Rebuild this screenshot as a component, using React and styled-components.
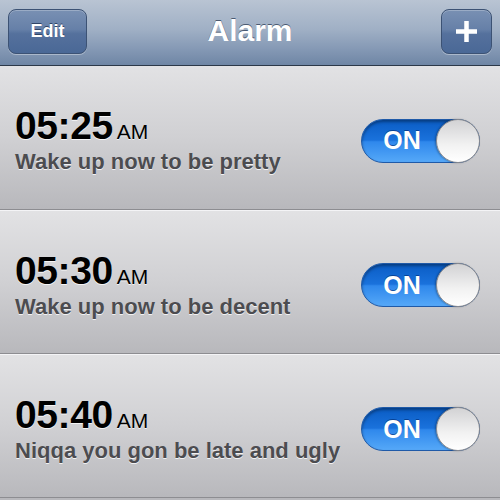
import React from 'react';
import styled, { createGlobalStyle } from 'styled-components';

const GlobalStyle = createGlobalStyle`
  html, body {
    margin: 0;
    padding: 0;
    background: #b8b8bc;
  }
  body {
    font-family: "Liberation Sans", Arial, sans-serif;
  }
`;

const Screen = styled.div`
  width: 500px;
  height: 500px;
  overflow: hidden;
  display: flex;
  flex-direction: column;
`;

const NavBar = styled.div`
  height: 66px;
  flex-shrink: 0;
  display: flex;
  align-items: center;
  justify-content: space-between;
  padding: 0 8px 2px;
  box-sizing: border-box;
  background: linear-gradient(#b9c4d3 0%, #a0b0c5 45%, #8599b5 75%, #6f86a5 100%);
  border-bottom: 1px solid #2c3848;
  position: relative;
`;

const NavTitle = styled.div`
  position: absolute;
  left: 0;
  right: 0;
  top: 14px;
  text-align: center;
  font-size: 30px;
  font-weight: bold;
  color: #fff;
  text-shadow: 0 -1px 0 #4a5a72;
  pointer-events: none;
`;

const BarButton = styled.button`
  height: 45px;
  width: ${p => p.$width}px;
  border-radius: 8px;
  border: 1px solid #3c5274;
  background: linear-gradient(#7990b3 0%, #6680a8 45%, #55719d 55%, #4a6896 100%);
  box-shadow: inset 0 1px 0 rgba(255,255,255,0.25), 0 1px 0 rgba(255,255,255,0.35);
  color: #fff;
  font-family: "Liberation Sans", Arial, sans-serif;
  font-weight: bold;
  font-size: ${p => p.$size}px;
  text-shadow: 0 -1px 0 #2f4466;
  display: flex;
  align-items: center;
  justify-content: center;
  padding: 0;
  position: relative;
  z-index: 1;
`;

const Row = styled.div`
  height: 144px;
  flex-shrink: 0;
  display: flex;
  align-items: center;
  justify-content: space-between;
  padding: 6px 20px 0 15px;
  box-sizing: border-box;
  background: linear-gradient(#e2e2e4 0%, #d0d0d3 50%, #b8b8bc 100%);
  border-top: ${p => (p.$first ? 'none' : '1px solid #f4f4f6')};
  border-bottom: 1px solid #8d8d91;
`;

const Info = styled.div`
  display: flex;
  flex-direction: column;
`;

const TimeLine = styled.div`
  display: flex;
  align-items: baseline;
  gap: 4px;
  color: #000;
  text-shadow: 0 1px 0 rgba(255,255,255,0.8);
`;

const Time = styled.span`
  font-size: 39px;
  font-weight: bold;
  letter-spacing: -0.4px;
  line-height: 40px;
`;

const Meridiem = styled.span`
  font-size: 21px;
`;

const Label = styled.div`
  margin-top: 3px;
  font-size: 22px;
  font-weight: bold;
  color: #4c4c50;
  text-shadow: 0 1px 0 rgba(255,255,255,0.8);
`;

const Switch = styled.div`
  width: 119px;
  height: 44px;
  border-radius: 22px;
  box-sizing: border-box;
  border: 1px solid #1f5aa8;
  background: linear-gradient(#0a5cc4 0%, #1a72dc 48%, #2f88ec 52%, #55a8f8 100%);
  box-shadow: inset 0 2px 3px rgba(0,0,0,0.35);
  display: flex;
  align-items: center;
  justify-content: space-between;
`;

const SwitchText = styled.span`
  flex: 1;
  text-align: center;
  color: #fff;
  font-weight: bold;
  font-size: 25px;
  text-shadow: 0 -1px 0 rgba(0,40,110,0.6);
  padding-left: 6px;
`;

const Knob = styled.div`
  width: 44px;
  height: 44px;
  margin-right: -1px;
  border-radius: 50%;
  box-sizing: border-box;
  border: 1px solid #8b8b8f;
  background: linear-gradient(#d2d2d4 0%, #f2f2f2 60%, #ffffff 100%);
  box-shadow: -1px 0 2px rgba(0,0,0,0.3);
`;

const alarms = [
  { time: '05:25', label: 'Wake up now to be pretty' },
  { time: '05:30', label: 'Wake up now to be decent' },
  { time: '05:40', label: 'Niqqa you gon be late and ugly' },
];

const AlarmRow = ({ alarm, first }) => (
  <Row $first={first}>
    <Info>
      <TimeLine>
        <Time>{alarm.time}</Time>
        <Meridiem>AM</Meridiem>
      </TimeLine>
      <Label>{alarm.label}</Label>
    </Info>
    <Switch>
      <SwitchText>ON</SwitchText>
      <Knob />
    </Switch>
  </Row>
);

const App = () => (
  <Screen>
    <GlobalStyle />
    <NavBar>
      <BarButton $width={79} $size={18}>Edit</BarButton>
      <NavTitle>Alarm</NavTitle>
      <BarButton $width={51} $size={30}>
        <svg width="21" height="21" viewBox="0 0 21 21">
          <path d="M10.5 0v21M0 10.5h21" stroke="#fff" strokeWidth="4.5" />
        </svg>
      </BarButton>
    </NavBar>
    {alarms.map((a, i) => (
      <AlarmRow key={a.time} alarm={a} first={i === 0} />
    ))}
  </Screen>
);

export default App;
